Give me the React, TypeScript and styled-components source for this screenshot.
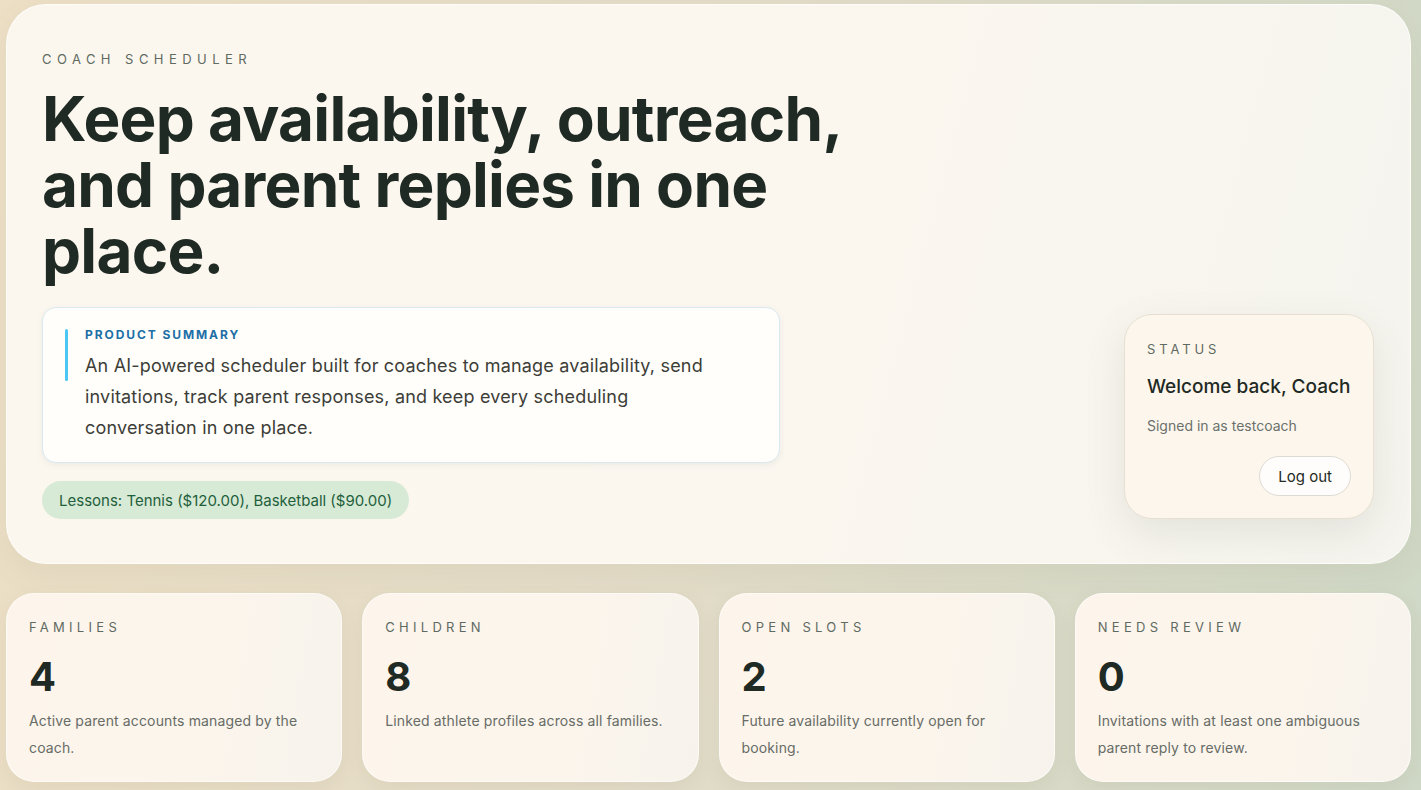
import React from 'react';
import styled, { createGlobalStyle } from 'styled-components';

const GlobalStyle = createGlobalStyle`
  * { box-sizing: border-box; }
  html, body {
    margin: 0;
    padding: 0;
  }
  body {
    font-family: Inter, 'Noto Sans', sans-serif;
    color: #1f2a24;
    background: linear-gradient(100deg, #ecdfc5 0%, #e4dcc8 45%, #cfd8c6 100%);
    min-height: 100vh;
  }
`;

const StyledPage = styled.main`
  padding: 4px 10px 10px 6px;
  display: flex;
  flex-direction: column;
  gap: 29px;
`;

const StyledHero = styled.section`
  display: grid;
  grid-template-columns: 1fr 250px;
  align-items: end;
  gap: 40px;
  padding: 46px 36px 44px 35px;
  border-radius: 40px;
  border: 1px solid rgba(255, 255, 255, 0.7);
  background: linear-gradient(105deg, #fcf7ee 0%, #fbf7ef 55%, #f5f4ee 100%);
  box-shadow: 0 10px 30px rgba(120, 110, 80, 0.08);
`;

const StyledMain = styled.div`
  display: flex;
  flex-direction: column;
  align-items: flex-start;
`;

const Eyebrow = styled.p<{ $spacing?: number }>`
  margin: 0;
  font-size: 13px;
  letter-spacing: ${(p) => p.$spacing ?? 0.33}em;
  text-transform: uppercase;
  color: #5f6a62;
  font-weight: 400;
`;

const Headline = styled.h1`
  margin: 19px 0 23px;
  max-width: 830px;
  font-size: 62px;
  line-height: 66px;
  font-weight: 700;
  letter-spacing: -0.012em;
  color: #1e2a23;
`;

const Summary = styled.div`
  width: 738px;
  padding: 19px 22px 19px 22px;
  border-radius: 14px;
  background: #fffefa;
  border: 1px solid #d9e9f1;
  box-shadow: 0 2px 6px rgba(60, 90, 110, 0.08);
  display: flex;
  gap: 17px;
`;

const SummaryBar = styled.span`
  flex: 0 0 3px;
  height: 52px;
  margin-top: 2px;
  border-radius: 2px;
  background: #4cc7f4;
`;

const SummaryBody = styled.div`
  display: flex;
  flex-direction: column;
`;

const SummaryLabel = styled.span`
  font-size: 12px;
  font-weight: 700;
  letter-spacing: 0.16em;
  text-transform: uppercase;
  color: #1d6fa6;
  line-height: 16px;
`;

const SummaryText = styled.p`
  margin: 7px 0 0;
  max-width: 650px;
  font-size: 18px;
  line-height: 31px;
  letter-spacing: 0.01em;
  color: #3d3d38;
`;

const Pill = styled.span`
  margin-top: 18px;
  padding: 0 17px;
  height: 38px;
  display: inline-flex;
  align-items: center;
  border-radius: 19px;
  background: #d7ead6;
  color: #1f5f3c;
  font-size: 15px;
`;

const StatusCard = styled.aside`
  padding: 26px 22px 22px 22px;
  border-radius: 28px;
  background: #fdf6ec;
  border: 1px solid #e7e0d2;
  box-shadow: 0 14px 40px rgba(90, 100, 80, 0.12);
  display: flex;
  flex-direction: column;
`;

const StatusTitle = styled.h2`
  margin: 17px 0 0;
  font-size: 19px;
  line-height: 26px;
  font-weight: 500;
  white-space: nowrap;
  color: #1f2a24;
`;

const StatusMeta = styled.p`
  margin: 17px 0 0;
  font-size: 14px;
  color: #6b716c;
`;

const LogoutButton = styled.button`
  align-self: flex-end;
  margin-top: 22px;
  height: 40px;
  padding: 0 18px;
  border-radius: 20px;
  border: 1px solid #dedbd4;
  background: #fffdfb;
  font-family: inherit;
  font-size: 15px;
  color: #1f2a24;
`;

const StatGrid = styled.section`
  display: grid;
  grid-template-columns: repeat(4, 1fr);
  gap: 20px;
`;

const StatCard = styled.article`
  height: 189px;
  padding: 25px 22px;
  border-radius: 28px;
  background: linear-gradient(100deg, #fdf5ec 0%, #fcf5ec 50%, #f7f3ec 100%);
  border: 1px solid rgba(255, 255, 255, 0.6);
  box-shadow: 0 6px 18px rgba(110, 100, 70, 0.08);
`;

const StatValue = styled.div`
  margin-top: 18px;
  font-size: 40px;
  line-height: 48px;
  font-weight: 700;
  color: #1e2a23;
`;

const StatText = styled.p`
  margin: 6px 0 0;
  font-size: 14px;
  line-height: 27px;
  letter-spacing: 0.01em;
  color: #676c66;
`;

const stats = [
  { label: 'Families', value: 4, text: 'Active parent accounts managed by the coach.' },
  { label: 'Children', value: 8, text: 'Linked athlete profiles across all families.' },
  { label: 'Open slots', value: 2, text: 'Future availability currently open for booking.' },
  { label: 'Needs review', value: 0, text: 'Invitations with at least one ambiguous parent reply to review.' }
];

const App = () => {
  return (
    <>
      <GlobalStyle />
      <StyledPage>
        <StyledHero>
          <StyledMain>
            <Eyebrow $spacing={0.42}>Coach Scheduler</Eyebrow>
            <Headline>Keep availability, outreach, and parent replies in one place.</Headline>
            <Summary>
              <SummaryBar />
              <SummaryBody>
                <SummaryLabel>Product summary</SummaryLabel>
                <SummaryText>
                  An AI-powered scheduler built for coaches to manage availability, send invitations, track parent
                  responses, and keep every scheduling conversation in one place.
                </SummaryText>
              </SummaryBody>
            </Summary>
            <Pill>Lessons: Tennis ($120.00), Basketball ($90.00)</Pill>
          </StyledMain>
          <StatusCard>
            <Eyebrow $spacing={0.3}>Status</Eyebrow>
            <StatusTitle>Welcome back, Coach</StatusTitle>
            <StatusMeta>Signed in as testcoach</StatusMeta>
            <LogoutButton type="button">Log out</LogoutButton>
          </StatusCard>
        </StyledHero>
        <StatGrid>
          {stats.map((s) => (
            <StatCard key={s.label}>
              <Eyebrow>{s.label}</Eyebrow>
              <StatValue>{s.value}</StatValue>
              <StatText>{s.text}</StatText>
            </StatCard>
          ))}
        </StatGrid>
      </StyledPage>
    </>
  );
};

export default App;
